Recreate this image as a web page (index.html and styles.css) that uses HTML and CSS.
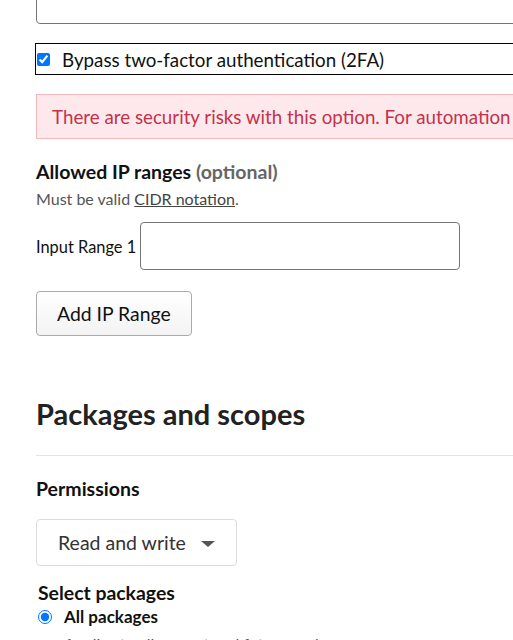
FILE: index.html
```html
<!DOCTYPE html>
<html lang="en">
<head>
    <meta charset="UTF-8">
    <meta name="viewport" content="width=device-width, initial-scale=1.0">
    <title>Token settings</title>
    <link rel="stylesheet" href="styles.css">
</head>
<body>
    <div class="page">
        <input class="text-input top-input" type="text" aria-label="Token name">

        <label class="bypass-row">
            <input type="checkbox" checked>
            <span>Bypass two-factor authentication (2FA)</span>
        </label>

        <div class="warning">
            There are security risks with this option. For automation workflows, prefer granular tokens.
        </div>

        <h3 class="field-title">Allowed IP ranges <span class="optional">(optional)</span></h3>
        <p class="hint">Must be valid <a href="#">CIDR notation</a>.</p>

        <div class="range-row">
            <label for="range1">Input Range 1</label>
            <input id="range1" class="text-input range-input" type="text">
        </div>

        <button class="btn" type="button">Add IP Range</button>

        <h2 class="section-title">Packages and scopes</h2>
        <hr class="divider">

        <h3 class="field-title permissions">Permissions</h3>
        <div class="select">
            <span>Read and write</span>
            <span class="caret"></span>
        </div>

        <fieldset class="packages">
            <legend>Select packages</legend>
            <label class="radio-row">
                <input type="radio" name="pkg" checked>
                <span>All packages</span>
            </label>
            <p class="radio-hint">Applies to all current and future packages</p>
        </fieldset>
    </div>
</body>
</html>
```

FILE: styles.css
```css
body {
    font-family: 'Lato', 'Liberation Sans', sans-serif;
    color: #111111;
    background-color: #ffffff;
    margin: 0;
    padding: 0 0 0 36px;
    overflow: hidden;
}
.page {
    width: 720px;
}
.text-input {
    display: block;
    border: 1px solid #767676;
    border-radius: 4px;
    background-color: #ffffff;
    box-sizing: border-box;
    font: inherit;
}
.top-input {
    width: 100%;
    height: 44px;
    margin-top: -20px;
}
.bypass-row {
    display: flex;
    align-items: center;
    gap: 12px;
    margin: 19px 0 0 -1px;
    height: 32px;
    border: 1px solid #000000;
    box-sizing: border-box;
    padding-left: 1px;
    font-size: 18.75px;
}
.bypass-row input {
    width: 13px;
    height: 13px;
    margin: 0;
    accent-color: #0075ff;
}
.warning {
    margin-top: 19px;
    height: 45px;
    box-sizing: border-box;
    padding: 0 15px;
    line-height: 43px;
    background-color: #fde9eb;
    border: 1px solid #f6b7bd;
    color: #c4314b;
    font-size: 18.75px;
    white-space: nowrap;
}
.field-title {
    font-size: 19.5px;
    line-height: 22px;
    font-weight: 700;
    margin: 22px 0 0;
}
.optional {
    color: #666666;
}
.hint {
    font-size: 16px;
    line-height: 18px;
    color: #555555;
    margin: 7px 0 0;
}
.hint a {
    color: #444444;
}
.range-row {
    display: flex;
    align-items: center;
    gap: 4px;
    margin-top: 14px;
    font-size: 16.4px;
}
.range-input {
    width: 320px;
    height: 48px;
}
.btn {
    display: block;
    margin-top: 21px;
    height: 45px;
    padding: 0 20px;
    font: inherit;
    font-size: 19.4px;
    color: #111111;
    border: 1px solid #aaaaaa;
    border-radius: 4px;
    background: linear-gradient(#ffffff, #f3f3f3);
}
.section-title {
    font-size: 29px;
    line-height: 34px;
    font-weight: 700;
    color: #222222;
    margin: 61px 0 0;
}
.divider {
    border: 0;
    border-top: 1px solid #e4e4e4;
    margin: 24px 0 0;
}
.permissions {
    margin-top: 22px;
}
.select {
    display: inline-flex;
    align-items: center;
    gap: 15px;
    margin-top: 19px;
    height: 47px;
    box-sizing: border-box;
    padding: 0 21px;
    border: 1px solid #dddddd;
    border-radius: 4px;
    font-size: 19.5px;
    color: #333333;
}
.caret {
    width: 0;
    height: 0;
    border-left: 7px solid transparent;
    border-right: 7px solid transparent;
    border-top: 6px solid #555555;
    margin-top: 3px;
}
.packages {
    border: 0;
    margin: 16px 0 0 2px;
    padding: 0;
}
.packages legend {
    padding: 0;
    font-size: 19.4px;
    line-height: 22px;
    font-weight: 700;
}
.radio-row {
    display: flex;
    align-items: center;
    gap: 12px;
    margin-top: 3px;
    font-size: 17px;
    line-height: 19px;
    font-weight: 700;
}
.radio-row input {
    width: 14px;
    height: 14px;
    margin: 0;
    accent-color: #0075ff;
}
.radio-hint {
    margin: 8px 0 0 26px;
    font-size: 16px;
    color: #555555;
}
```
